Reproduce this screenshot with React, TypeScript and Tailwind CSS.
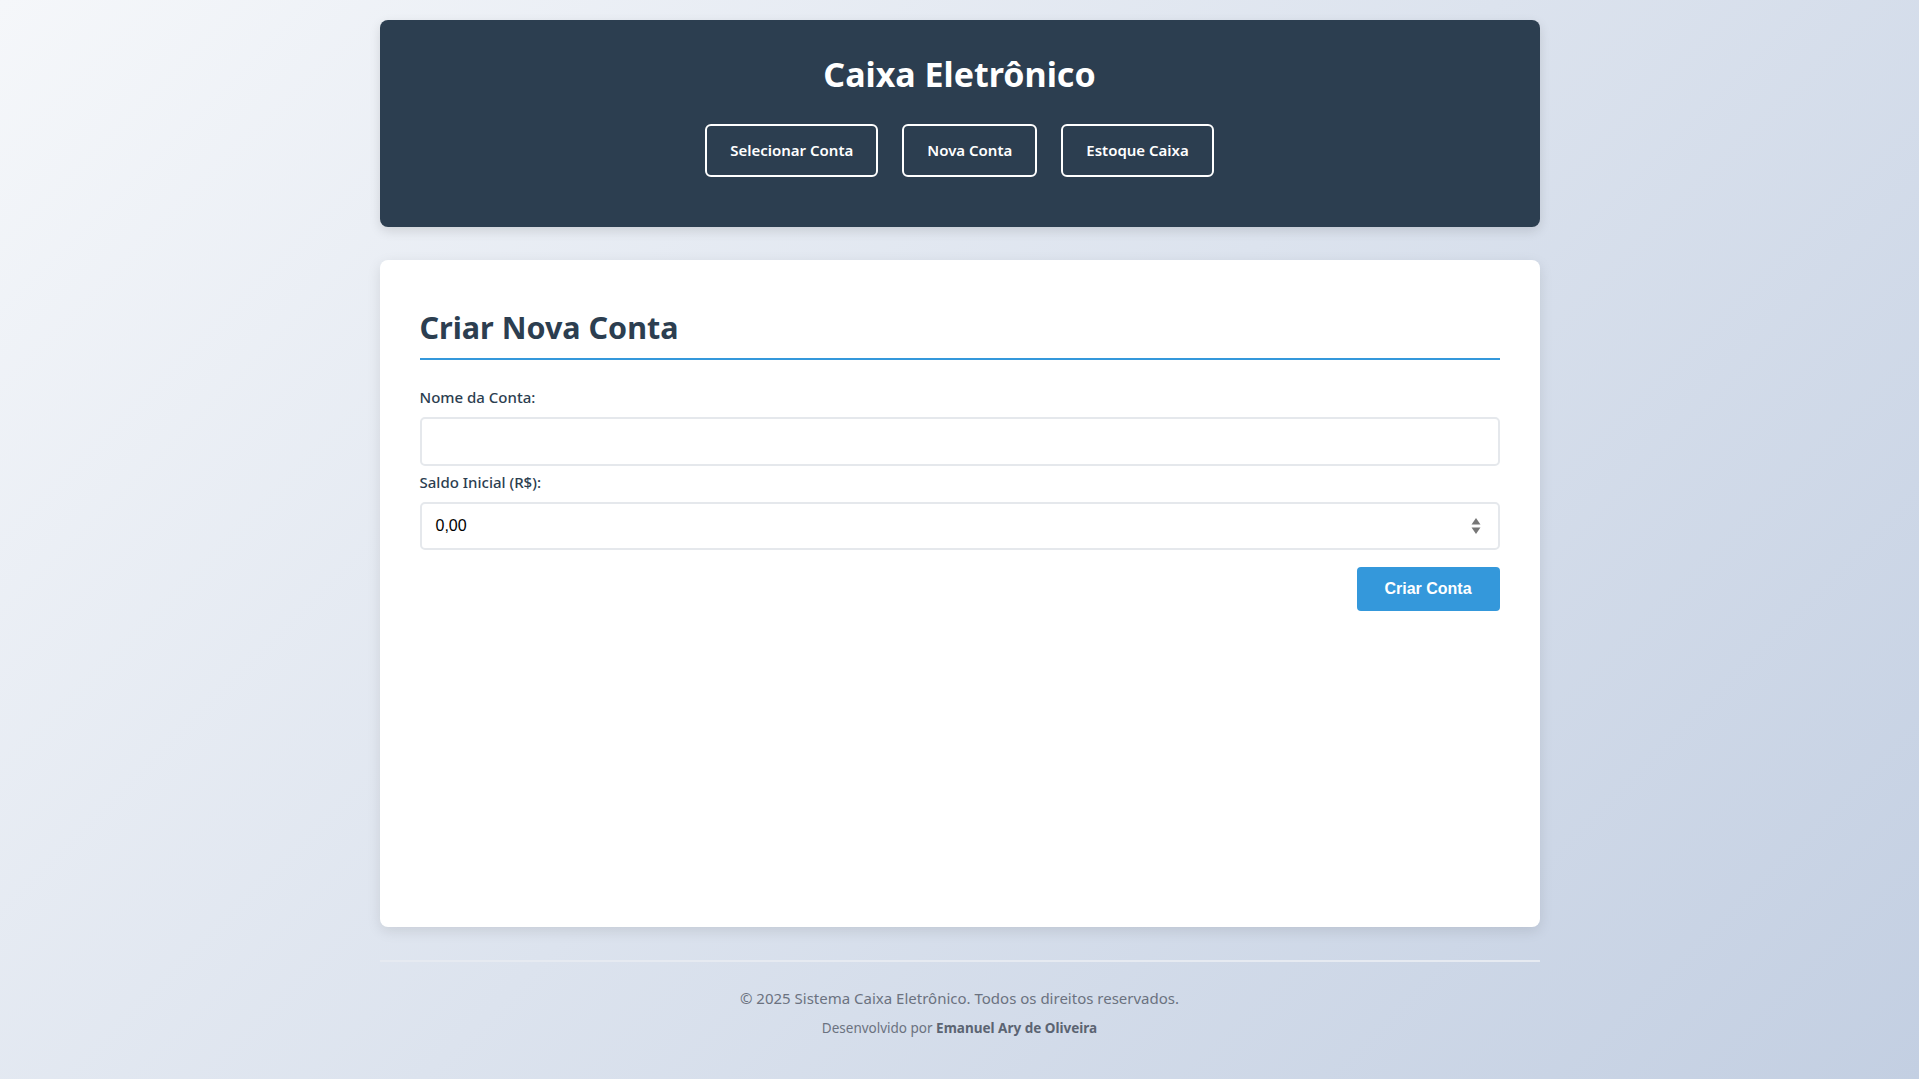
import React from "react";

export default function App() {
  return (
    <div className="min-h-screen w-full bg-[linear-gradient(135deg,#f5f7fa_0%,#c3cfe2_100%)] font-['Noto_Sans',sans-serif]">
      <div className="mx-auto w-[1160px] pt-[20px] pb-[40px]">
        <header className="flex h-[207px] flex-col items-center rounded-lg bg-[#2c3e50] pt-[32px] shadow-[0_4px_12px_rgba(0,0,0,0.12)]">
          <h1 className="text-[34px] font-bold leading-[44px] text-white">Caixa Eletrônico</h1>
          <nav className="mt-[28px] flex gap-[24px]">
            {["Selecionar Conta", "Nova Conta", "Estoque Caixa"].map((t) => (
              <button
                key={t}
                className="h-[53px] rounded-md border-2 border-white px-[23px] text-[15px] font-semibold text-white"
              >
                {t}
              </button>
            ))}
          </nav>
        </header>

        <main className="mt-[33px] h-[667px] rounded-lg bg-white px-[40px] pt-[48px] shadow-[0_4px_14px_rgba(0,0,0,0.1)]">
          <h2 className="border-b-2 border-[#3498db] pb-[12px] text-[30.5px] font-bold leading-[38px] text-[#2c3e50]">
            Criar Nova Conta
          </h2>
          <label className="mt-[26px] block text-[15px] font-medium leading-[22px] text-[#2c3e50]">Nome da Conta:</label>
          <input
            type="text"
            className="mt-[9px] block h-[49px] w-full rounded-[5px] border-2 border-[#e5e8ec] px-[14px] font-['Liberation_Sans',sans-serif] text-[16px] outline-none"
          />
          <label className="mt-[5px] block text-[15px] font-medium leading-[22px] text-[#2c3e50]">Saldo Inicial (R$):</label>
          <div className="relative mt-[9px]">
            <div className="flex h-[48px] w-full items-center rounded-[5px] border-2 border-[#e5e8ec] px-[14px] font-['Liberation_Sans',sans-serif] text-[16px] text-black">
              0,00
            </div>
            <svg
              className="absolute right-[19px] top-1/2 -translate-y-1/2"
              width="10"
              height="18"
              viewBox="0 0 10 18"
            >
              <path d="M5 1 L9.5 7.5 L0.5 7.5 Z" fill="#777" />
              <path d="M5 17 L9.5 10.5 L0.5 10.5 Z" fill="#777" />
            </svg>
          </div>
          <div className="mt-[17px] flex justify-end">
            <button className="h-[44px] w-[143px] rounded-[4px] bg-[#3498db] font-['Liberation_Sans',sans-serif] text-[16px] font-bold text-white">
              Criar Conta
            </button>
          </div>
        </main>

        <footer className="mt-[33px] border-t-2 border-[#e6eaf1] pt-[24px] text-center">
          <p className="text-[15px] leading-[24px] text-[#6b7280]">
            © 2025 Sistema Caixa Eletrônico. Todos os direitos reservados.
          </p>
          <p className="mt-[8px] text-[13.5px] leading-[20px] text-[#6b7280]">
            Desenvolvido por <strong className="font-bold text-[#5b6472]">Emanuel Ary de Oliveira</strong>
          </p>
        </footer>
      </div>
    </div>
  );
}
